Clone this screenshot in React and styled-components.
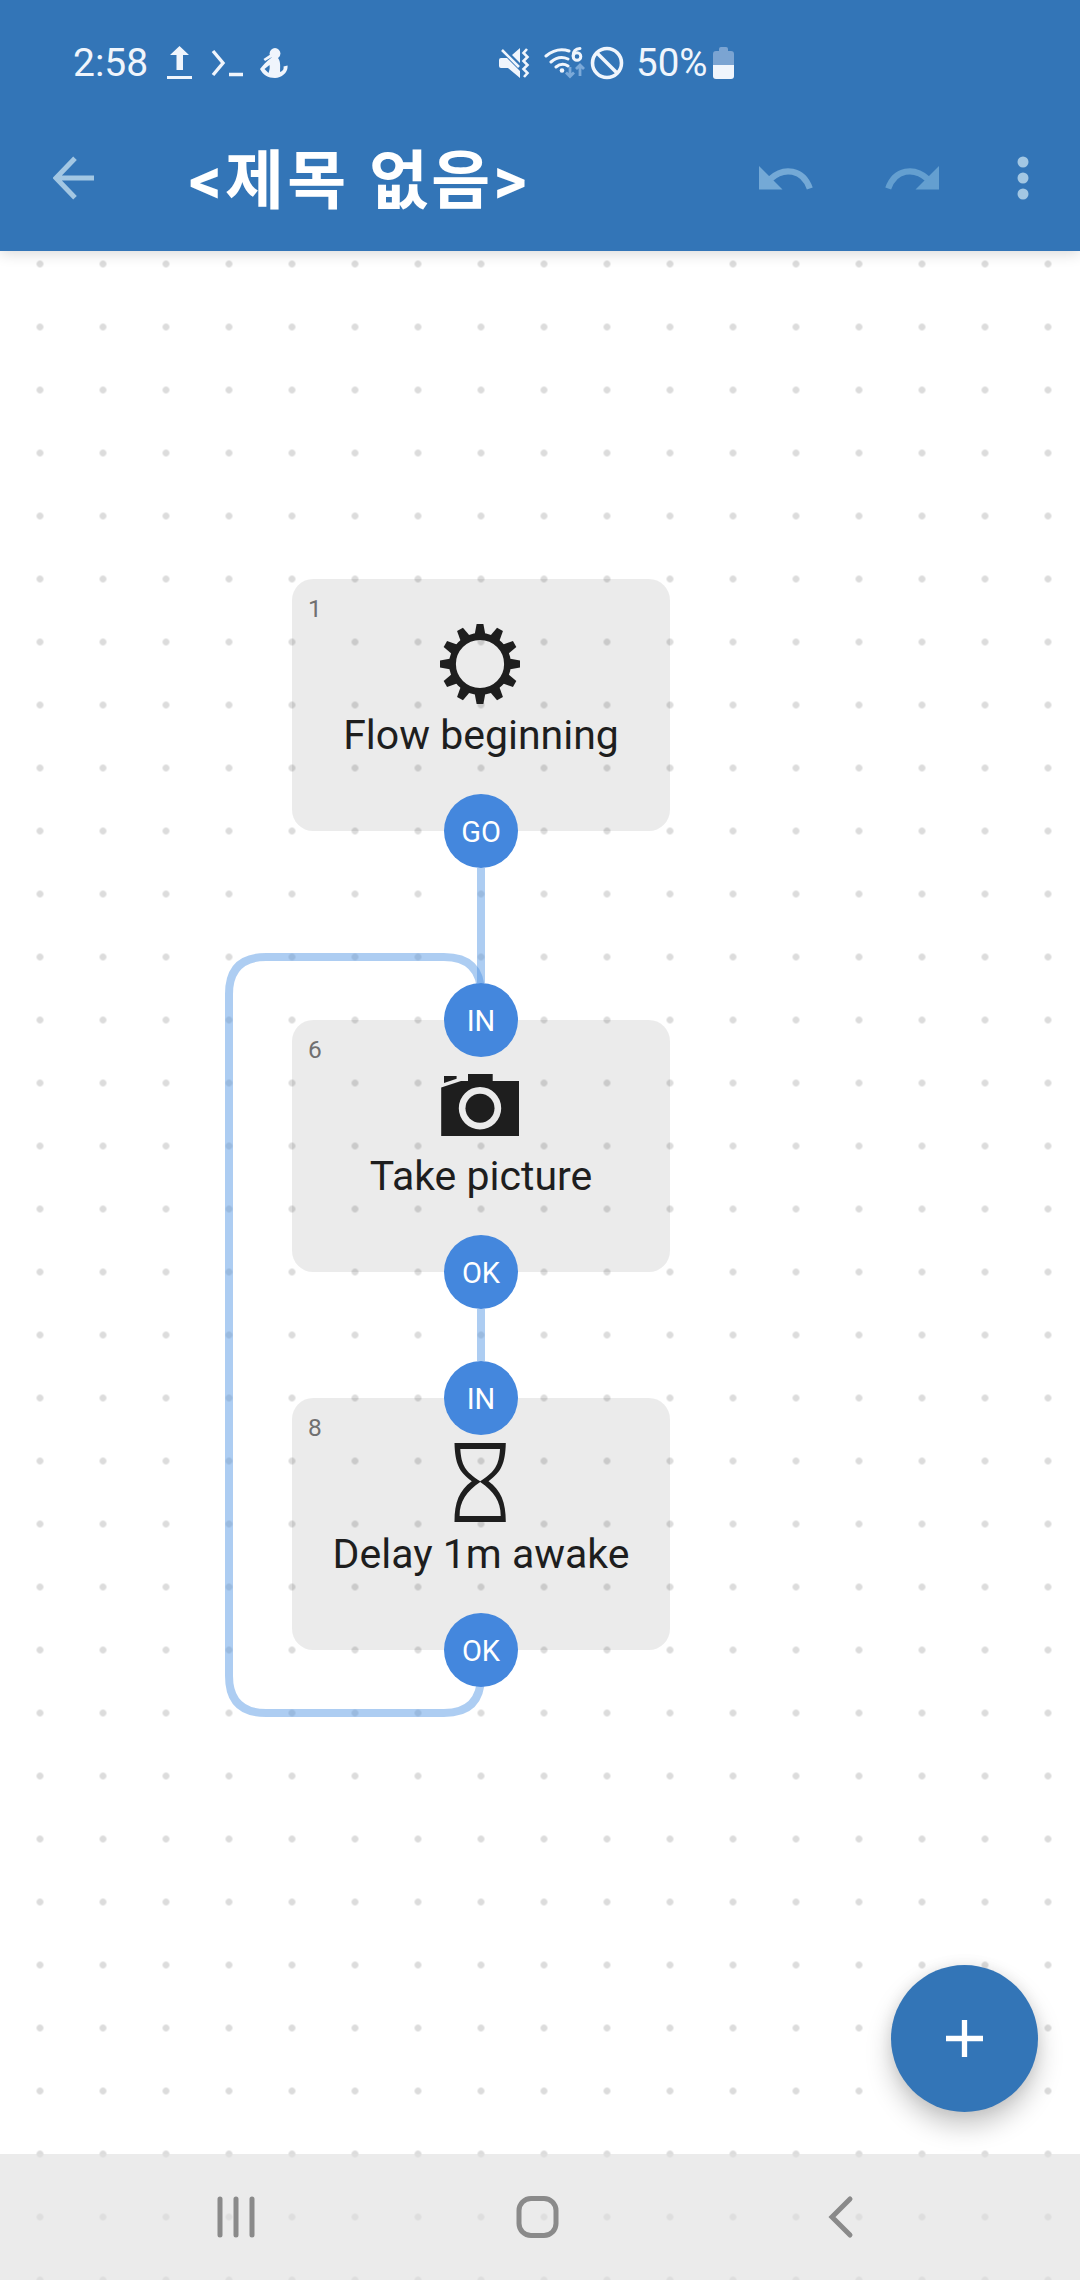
import React from 'react';
import styled, { createGlobalStyle } from 'styled-components';

const GlobalStyle = createGlobalStyle`
  * { box-sizing: border-box; }
  body { margin: 0; background: #fff; font-family: Roboto, "Noto Sans CJK KR", sans-serif; }
`;

const Screen = styled.div`
  width: 1080px;
  height: 2280px;
  display: flex;
  flex-direction: column;
  overflow: hidden;
  background-color: #fff;
  background-image: radial-gradient(circle, #dcdcdc 3px, rgba(220, 220, 220, 0) 3.8px);
  background-size: 63px 63px;
  background-position: 8.5px 43.5px;
`;

const Header = styled.header`
  height: 251px;
  flex: none;
  display: flex;
  flex-direction: column;
  background: #3375b7;
  box-shadow: 0 2px 14px rgba(0, 0, 0, 0.16);
`;

const StatusBar = styled.div`
  height: 105px;
  padding: 21px 0 0 73px;
  display: flex;
  align-items: center;
  color: #f0f5fc;
`;

const Clock = styled.span`
  width: 76px;
  font-size: 39px;
  line-height: 46px;
  margin-right: 16px;
  white-space: nowrap;
`;

const StatusIcon = styled.svg`
  flex: none;
  display: block;
  margin-right: ${(p) => p.$gap || 0}px;
`;

const Battery = styled.span`
  font-size: 38.5px;
  line-height: 46px;
  width: 77px;
  white-space: nowrap;
`;

const Toolbar = styled.div`
  height: 146px;
  display: flex;
  align-items: center;
  padding: 0 36px 1px 38px;
`;

const IconButton = styled.button`
  width: ${(p) => p.$w || 72}px;
  height: 72px;
  padding: 0;
  border: 0;
  background: none;
  display: flex;
  align-items: center;
  justify-content: center;
  color: ${(p) => p.$tone || '#a3c7e3'};
`;

const Title = styled.h1`
  flex: 1;
  margin: 0 0 0 79px;
  padding-top: 9px;
  color: #fff;
  font-size: 64px;
  line-height: 80px;
  font-weight: 700;
  letter-spacing: 3.4px;
  white-space: nowrap;
`;

const Actions = styled.div`
  display: flex;
  align-items: center;
  gap: 54px;
`;

const Canvas = styled.main`
  flex: 1;
  position: relative;
`;

const Wires = styled.svg`
  position: absolute;
  left: 0;
  top: 0;
  fill: none;
  stroke: rgba(74, 144, 226, 0.45);
  stroke-width: 8;
`;

const Block = styled.section`
  position: absolute;
  left: 292px;
  top: ${(p) => p.$top}px;
  width: 378px;
  height: 252px;
  border-radius: 21px;
  background: rgba(0, 0, 0, 0.08);
  color: #1e1e1e;
  display: flex;
  flex-direction: column;
  align-items: center;
  padding-top: 45px;
`;

const BlockId = styled.span`
  position: absolute;
  left: 16px;
  top: 15px;
  font-size: 24.5px;
  line-height: 29px;
  color: #707070;
`;

const BlockIcon = styled.svg`
  display: block;
  width: 80px;
  height: 80px;
  margin-right: 2px;
`;

const BlockTitle = styled.div`
  margin-top: 6px;
  font-size: 41px;
  line-height: 51px;
  white-space: nowrap;
`;

const Port = styled.span`
  position: absolute;
  left: 152px;
  top: ${(p) => (p.$side === 'in' ? -37 : 215)}px;
  width: 74px;
  height: 74px;
  border-radius: 50%;
  background: #4487dd;
  color: #fff;
  font-size: 29px;
  line-height: 76px;
  text-align: center;
`;

const Fab = styled.button`
  position: absolute;
  left: 891px;
  top: 1714px;
  width: 147px;
  height: 147px;
  border: 0;
  padding: 0;
  border-radius: 50%;
  background: #3375b7;
  box-shadow: 0 14px 26px rgba(0, 0, 0, 0.22), 0 0 14px rgba(0, 0, 0, 0.08);
  display: flex;
  align-items: center;
  justify-content: center;
`;

const NavBar = styled.nav`
  height: 126px;
  flex: none;
  display: flex;
  align-items: center;
  justify-content: space-between;
  padding: 0 216px 2px 210px;
  background: rgba(223, 223, 223, 0.63);
  color: #8a8a8a;
`;

const NavButton = styled.button`
  width: 50px;
  height: 50px;
  padding: 0;
  border: 0;
  background: none;
  color: inherit;
`;

const teeth = Array.from({ length: 12 }, (_, i) => i * 30);

const Gear = () => (
  <BlockIcon viewBox="0 0 80 80">
    <circle cx="40" cy="40" r="27.5" fill="none" stroke="currentColor" strokeWidth="6.8" />
    {teeth.map((a) => (
      <path key={a} d="M34.6 11 L36.6 0 H43.4 L45.4 11Z" fill="currentColor" transform={`rotate(${a} 40 40)`} />
    ))}
  </BlockIcon>
);

const Camera = () => (
  <BlockIcon viewBox="0 0 80 80">
    <path
      fill="currentColor"
      fillRule="evenodd"
      d="M28 9H52.7V16H79V71H1.2V22.5L21 16H28Z M40 22a21.2 21.2 0 1 0 0 42.4a21.2 21.2 0 1 0 0-42.4Z"
    />
    <path fill="currentColor" d="M4 11H16.6V13.8L4 18Z" />
    <circle cx="40" cy="43.300" r="14.5" fill="currentColor" />
  </BlockIcon>
);

const Hourglass = () => (
  <BlockIcon viewBox="0 0 80 80">
    <path
      fill="currentColor"
      fillRule="evenodd"
      d="M14.5 0H65.8C65.3 21 61 29 48.5 38.3C61 47.5 65.8 59 65.8 79H14.5C14.5 59 19.3 47.5 31.8 38.3C19.3 29 15 21 14.5 0Z M20.3 6C21.3 22 25 28.5 40.2 38.3C55.3 28.5 59 22 60 6Z M40.2 39C26.5 48.5 19.6 58 19.6 73H60.7C60.7 58 53.9 48.5 40.2 39Z"
    />
  </BlockIcon>
);

const blocks = [
  { id: 1, top: 328, icon: Gear, title: 'Flow beginning', output: 'GO' },
  { id: 6, top: 769, icon: Camera, title: 'Take picture', input: 'IN', output: 'OK' },
  { id: 8, top: 1147, icon: Hourglass, title: 'Delay 1m awake', input: 'IN', output: 'OK' },
];

export default function App() {
  return (
    <>
      <GlobalStyle />
      <Screen>
        <Header>
          <StatusBar>
            <Clock>2:58</Clock>
            <StatusIcon width="30" height="34" viewBox="0 0 30 34" fill="currentColor" $gap={15}>
              <path d="M14.5 0L24 9H18V24H11.5V9H5Z" />
              <rect x="2" y="30" width="25" height="3" />
            </StatusIcon>
            <StatusIcon width="34" height="30" viewBox="0 0 34 30" $gap={16}>
              <path fill="none" stroke="currentColor" strokeWidth="3.4" d="M3 3L13 15L3 27M19 26.5H33" />
            </StatusIcon>
            <StatusIcon width="28" height="32" viewBox="0 0 28 32" fill="currentColor" $gap={211}>
              <circle cx="15" cy="6.5" r="5.4" />
              <path d="M11 11H18C21 15 20 20 20 25C23 24 24 22 23.500 19.500L27.500 18.500C28.500 25 22 31 15 31C8 31 3 28 0 22C3 18 6 15 11 11ZM9.5 18L4.5 22L8.5 26C9.5 23 10 21 9.5 18Z" fillRule="evenodd" />
              <path d="M3.5 12L11 7L12 10L5 14Z" />
            </StatusIcon>
            <StatusIcon width="31" height="32" viewBox="0 0 31 32" $gap={14}>
              <path fill="currentColor" d="M0 13Q0 11 2 11H8L21 24V31L9 21H2Q0 21 0 19ZM13 8L21 1V16Z" />
              <path fill="none" stroke="currentColor" strokeWidth="2.6" d="M3 3L20 20M28 2L24.5 6L28.5 10L24.5 14L28.5 18L24.5 22L28.5 26L25 30" />
            </StatusIcon>
            <StatusIcon width="42" height="32" viewBox="0 0 42 32" $gap={4}>
              <g fill="none" stroke="currentColor" strokeWidth="3" strokeLinecap="round">
                <path d="M2 9Q13 0 25 4M7 15Q15 8 24 12M12 20Q18 15 24 19" />
                <circle cx="33" cy="9.5" r="3.8" />
                <path d="M36 1.5Q29 2 29.2 9" />
              </g>
              <circle cx="18" cy="23.5" r="2.3" fill="currentColor" />
              <path d="M26 20V29M22 25.5L26 29.5L30 25.5M36 29V19M32 22L36 18L40 22" fill="none" stroke="#7ba9d8" strokeWidth="2.8" />
            </StatusIcon>
            <StatusIcon width="34" height="34" viewBox="0 0 34 34" fill="none" stroke="currentColor" strokeWidth="3.6" $gap={12}>
              <circle cx="17" cy="17" r="14.5" />
              <path d="M7 7L27 27" />
            </StatusIcon>
            <Battery>50%</Battery>
            <StatusIcon width="22" height="34" viewBox="0 0 22 34">
              <path fill="#7ba4d2" d="M6 3Q6 1 8 1H13Q15 1 15 3V5H18Q21 5 21 8V20H0V8Q0 5 3 5H6Z" />
              <path fill="currentColor" d="M0 19H21V30Q21 33 18 33H3Q0 33 0 30Z" />
            </StatusIcon>
          </StatusBar>
          <Toolbar>
            <IconButton aria-label="Back">
              <svg width="42" height="44" viewBox="0 0 42 44" fill="none" stroke="currentColor" strokeWidth="5">
                <path d="M41 22H5M22 2.2L3 22L22 41.8" />
              </svg>
            </IconButton>
            <Title>&lt;제목 없음&gt;</Title>
            <Actions>
              <IconButton aria-label="Undo" $tone="#74a9d6">
                <svg width="54" height="24" viewBox="0 0 54 24">
                  <path d="M0 0V23.5H23.5Z" fill="currentColor" />
                  <path d="M11 13.2C25 0.500 44 3 50.8 22.500" fill="none" stroke="currentColor" strokeWidth="6.200" />
                </svg>
              </IconButton>
              <IconButton aria-label="Redo" $tone="#649fd0">
                <svg width="54" height="24" viewBox="0 0 54 24">
                  <g transform="matrix(-1 0 0 1 54 0)">
                    <path d="M0 0V23.5H23.5Z" fill="currentColor" />
                    <path d="M11 13.2C25 0.500 44 3 50.8 22.500" fill="none" stroke="currentColor" strokeWidth="6.200" />
                  </g>
                </svg>
              </IconButton>
              <IconButton aria-label="More" $w={42}>
                <svg width="12" height="44" viewBox="0 0 12 44" fill="currentColor">
                  <circle cx="6" cy="6" r="5.500" />
                  <circle cx="6" cy="22" r="5.500" />
                  <circle cx="6" cy="38" r="5.500" />
                </svg>
              </IconButton>
            </Actions>
          </Toolbar>
        </Header>
        <Canvas>
          <Wires width="1080" height="1903" viewBox="0 251 1080 1903">
            <path d="M481 868V983" />
            <path d="M481 1309V1361" />
            <path d="M481 1676Q481 1713 444 1713H266Q229 1713 229 1676V994Q229 957 266 957H444Q481 957 481 994" />
          </Wires>
          {blocks.map(({ id, top, icon: Icon, title, input, output }) => (
            <Block key={id} $top={top}>
              <BlockId>{id}</BlockId>
              <Icon />
              <BlockTitle>{title}</BlockTitle>
              {input && <Port $side="in">{input}</Port>}
              <Port $side="out">{output}</Port>
            </Block>
          ))}
          <Fab aria-label="Add">
            <svg width="37" height="37" viewBox="0 0 37 37" stroke="#fff" strokeWidth="5.300">
              <path d="M18.500 0V37M0 18.500H37" />
            </svg>
          </Fab>
        </Canvas>
        <NavBar>
          <NavButton aria-label="Recents">
            <svg width="50" height="50" viewBox="0 0 50 50" fill="none" stroke="currentColor" strokeWidth="5" strokeLinecap="round">
              <path d="M10 8V44M26 8V44M42 8V44" />
            </svg>
          </NavButton>
          <NavButton aria-label="Home">
            <svg width="50" height="50" viewBox="0 0 50 50" fill="none" stroke="currentColor" strokeWidth="5">
              <rect x="7" y="7.500" width="37" height="37" rx="12" />
            </svg>
          </NavButton>
          <NavButton aria-label="Back">
            <svg width="50" height="50" viewBox="0 0 50 50" fill="none" stroke="currentColor" strokeWidth="5" strokeLinecap="round">
              <path d="M36 8L18 26L36 44" />
            </svg>
          </NavButton>
        </NavBar>
      </Screen>
    </>
  );
}
